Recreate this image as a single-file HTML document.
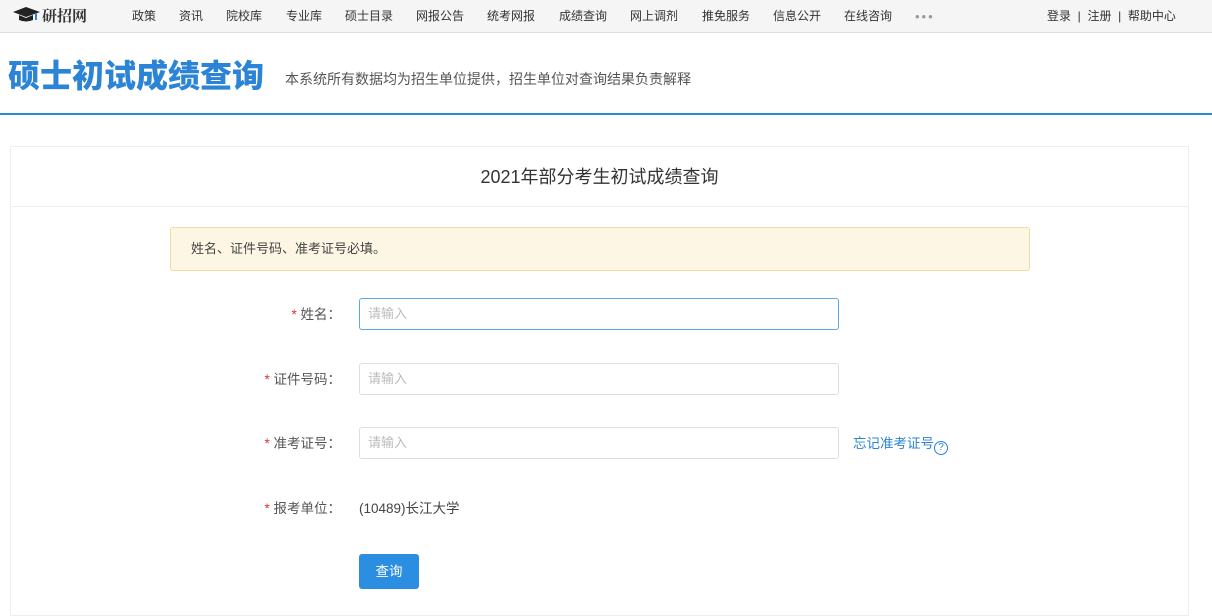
<!DOCTYPE html>
<html><head><meta charset="utf-8"><style>
*{margin:0;padding:0;box-sizing:border-box}
body{width:1212px;height:605px;overflow:hidden;background:#fff;font-family:"Liberation Sans","Noto Sans CJK SC",sans-serif;color:#333}
.top{height:33px;background:#f5f5f5;border-bottom:1px solid #ddd;position:relative;font-size:12px}
.top span{position:absolute;top:7px}
.logo{left:12px;top:5px!important;font-weight:bold;font-size:15px;font-family:"Noto Serif CJK SC",serif;color:#333}
.hd{height:82px;border-bottom:2px solid #2b8ad8;position:relative}
.hd h1{position:absolute;left:8px;top:18px;font-size:32px;color:#2b84d6;font-weight:900}
.hd p{position:absolute;left:285px;top:36px;font-size:14px;color:#555}
.card{position:absolute;left:10px;top:146px;width:1179px;height:470px;border:1px solid #eee}
.card .t{height:60px;border-bottom:1px solid #eee;text-align:center;line-height:60px;font-size:18px;color:#333}
.warn{position:absolute;left:159px;top:80px;width:860px;height:44px;background:#fdf6e4;border:1px solid #f3dc9c;border-radius:3px;font-size:13px;line-height:42px;padding-left:20px;color:#444}
.lab{position:absolute;width:330px;text-align:right;font-size:13.5px;color:#555}
.lab b{color:#e0322b;font-weight:normal}
.in{position:absolute;left:348px;width:480px;height:32px;border:1px solid #ddd;border-radius:3px;font-size:13px;color:#bbb;line-height:30px;padding-left:8px}
</style></head><body>
<div class="top">
<span class="logo"><svg width="30" height="18" viewBox="0 0 30 18" style="vertical-align:-3px"><path d="M1 6 L14 1 L28 6 L14 11Z" fill="#222"/><path d="M7 9 L7 14 Q14 17 21 14 L21 9 L14 12Z" fill="#222"/><path d="M24 7 L24 14" stroke="#2b84d6" stroke-width="2"/></svg>研招网</span>
<span style="left:132px">政策</span><span style="left:179px">资讯</span><span style="left:226px">院校库</span><span style="left:286px">专业库</span><span style="left:345px">硕士目录</span><span style="left:416px">网报公告</span><span style="left:487px">统考网报</span><span style="left:559px">成绩查询</span><span style="left:630px">网上调剂</span><span style="left:702px">推免服务</span><span style="left:773px">信息公开</span><span style="left:844px">在线咨询</span><span style="left:915px;top:9px;color:#999;letter-spacing:2px;font-size:13px">•••</span>
<span style="left:1047px">登录 &nbsp;| &nbsp;注册 &nbsp;| &nbsp;帮助中心</span>
</div>
<div class="hd"><h1>硕士初试成绩查询</h1><p>本系统所有数据均为招生单位提供，招生单位对查询结果负责解释</p></div>
<div class="card">
<div class="t">2021年部分考生初试成绩查询</div>
<div class="warn">姓名、证件号码、准考证号必填。</div>
<div class="lab" style="top:156px"><b>* </b>姓名：</div>
<div class="in" style="top:151px;border-color:#5ea7e0">请输入</div>
<div class="lab" style="top:221px"><b>* </b>证件号码：</div>
<div class="in" style="top:216px">请输入</div>
<div class="lab" style="top:285px"><b>* </b>准考证号：</div>
<div class="in" style="top:280px">请输入</div>
<div style="position:absolute;left:842px;top:285px;font-size:13.5px;color:#2b84d6">忘记准考证号<span style="display:inline-block;width:14px;height:14px;border:1px solid #2b84d6;border-radius:50%;font-size:10px;line-height:12px;text-align:center;vertical-align:-2px">?</span></div>
<div class="lab" style="top:350px"><b>* </b>报考单位：</div>
<div style="position:absolute;left:348px;top:350px;font-size:13.5px;color:#444">(10489)长江大学</div>
<div style="position:absolute;left:348px;top:407px;width:60px;height:35px;background:#2b8ee0;border-radius:3px;color:#fff;font-size:13.5px;text-align:center;line-height:35px">查询</div>
</div>
</body></html>
